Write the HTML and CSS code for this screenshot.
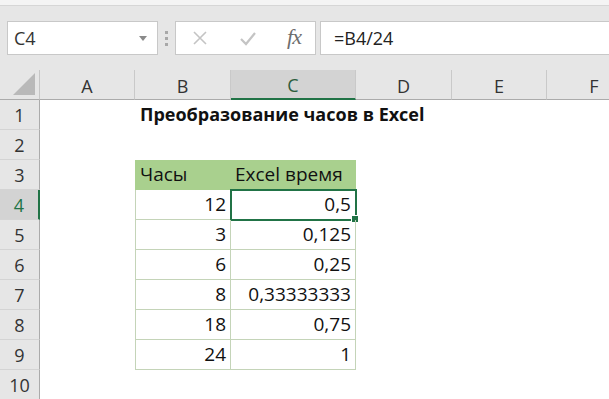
FILE: index.html
```html
<!doctype html>
<html>
<head>
<meta charset="utf-8">
<title>Преобразование часов в Excel</title>
<link rel="stylesheet" href="styles.css">
</head>
<body>
<div class="top-strip"></div>
<div class="formula-bar">
    <div class="name-box">
        <span class="name-txt">C4</span>
        <svg class="name-arrow" width="8" height="5" viewBox="0 0 8 5"><polygon points="0,0 8,0 4,5" fill="#8a8a8a"/></svg>
    </div>
    <div class="bar-dots"><i></i><i></i><i></i></div>
    <div class="fx-box">
        <svg class="fx-icon" width="16" height="16" viewBox="0 0 16 16"><path d="M2 2 L14 14 M14 2 L2 14" stroke="#c4c4c4" stroke-width="1.6" fill="none"/></svg>
        <svg class="fx-icon" width="18" height="16" viewBox="0 0 18 16"><path d="M2 9 L7 14 L16 3" stroke="#c4c4c4" stroke-width="2.2" fill="none"/></svg>
        <span class="fx-txt">fx</span>
    </div>
    <div class="formula-box">=B4/24</div>
</div>
<div class="sheet">
    <div class="hd corner"><svg width="22" height="22" viewBox="0 0 22 22"><polygon points="22,0 22,22 0,22" fill="#b9b9b9"/></svg></div>
    <div class="hd col">A</div>
    <div class="hd col">B</div>
    <div class="hd col col-on">C</div>
    <div class="hd col">D</div>
    <div class="hd col">E</div>
    <div class="hd col col-cut">F</div>

    <div class="hd row">1</div>
    <div class="cell"></div>
    <div class="cell title">Преобразование часов в Excel</div>
    <div class="cell"></div>
    <div class="cell"></div>
    <div class="cell"></div>
    <div class="cell"></div>

    <div class="hd row">2</div>
    <div class="cell"></div><div class="cell"></div><div class="cell"></div><div class="cell"></div><div class="cell"></div><div class="cell"></div>

    <div class="hd row">3</div>
    <div class="cell"></div>
    <div class="cell tb tb-first tb-head">Часы</div>
    <div class="cell tb tb-head">Excel время</div>
    <div class="cell"></div><div class="cell"></div><div class="cell"></div>

    <div class="hd row row-on">4</div>
    <div class="cell"></div>
    <div class="cell tb tb-first num">12</div>
    <div class="cell tb num selected">0,5<span class="handle"></span></div>
    <div class="cell"></div><div class="cell"></div><div class="cell"></div>

    <div class="hd row">5</div>
    <div class="cell"></div>
    <div class="cell tb tb-first num">3</div>
    <div class="cell tb num">0,125</div>
    <div class="cell"></div><div class="cell"></div><div class="cell"></div>

    <div class="hd row">6</div>
    <div class="cell"></div>
    <div class="cell tb tb-first num">6</div>
    <div class="cell tb num">0,25</div>
    <div class="cell"></div><div class="cell"></div><div class="cell"></div>

    <div class="hd row">7</div>
    <div class="cell"></div>
    <div class="cell tb tb-first num">8</div>
    <div class="cell tb num">0,33333333</div>
    <div class="cell"></div><div class="cell"></div><div class="cell"></div>

    <div class="hd row">8</div>
    <div class="cell"></div>
    <div class="cell tb tb-first num">18</div>
    <div class="cell tb num">0,75</div>
    <div class="cell"></div><div class="cell"></div><div class="cell"></div>

    <div class="hd row">9</div>
    <div class="cell"></div>
    <div class="cell tb tb-first num">24</div>
    <div class="cell tb num">1</div>
    <div class="cell"></div><div class="cell"></div><div class="cell"></div>

    <div class="hd row">10</div>
    <div class="cell"></div><div class="cell"></div><div class="cell"></div><div class="cell"></div><div class="cell"></div><div class="cell"></div>
</div>
</body>
</html>
```

FILE: styles.css
```css
html,body{margin:0;padding:0;background:#fff;}
body{font-family:"Open Sans","Noto Sans",sans-serif;color:#111;width:609px;height:399px;overflow:hidden;}

.top-strip{height:5px;background:#f4f4f4;border-bottom:1px solid #d6d6d6;}
.formula-bar{height:64px;background:#e6e6e6;display:flex;align-items:flex-start;padding:15px 0 0 7px;box-sizing:border-box;}
.name-box{width:151px;height:34px;background:#fff;border:1px solid #c8c8c8;box-sizing:border-box;display:flex;align-items:center;justify-content:space-between;padding:0 10px 0 6px;}
.name-txt{font-size:18px;color:#333;}
.name-arrow{margin-top:1px;}
.bar-dots{width:17px;height:34px;display:flex;flex-direction:column;align-items:center;justify-content:center;gap:3px;}
.bar-dots i{display:block;width:3px;height:3px;background:#a8a8a8;}
.fx-box{margin-left:0;width:141px;height:34px;background:#fff;border:1px solid #c8c8c8;box-sizing:border-box;display:flex;align-items:center;padding:0 14px 0 16px;justify-content:space-between;}
.fx-txt{font-family:"Liberation Serif","DejaVu Serif",serif;font-style:italic;font-size:22px;color:#6e6e6e;letter-spacing:-1px;margin-top:-2px;}
.formula-box{margin-left:4px;flex:1;height:34px;background:#fff;border:1px solid #c8c8c8;border-right:0;box-sizing:border-box;font-size:18px;line-height:32px;padding-left:13px;color:#222;}

.sheet{display:grid;grid-template-columns:40px 95px 96px 125px 96px 95px 62px;grid-template-rows:30px repeat(10,30px);}
.hd{background:#e6e6e6;color:#333;font-size:18px;box-sizing:border-box;display:flex;align-items:center;justify-content:center;}
.corner{border-right:1px solid #c6c6c6;border-bottom:1px solid #ababab;justify-content:flex-end;align-items:flex-end;padding:0 4px 4px 0;}
.col{border-right:1px solid #c9c9c9;border-bottom:1px solid #ababab;padding-top:2px;}
.col-cut{border-right:0;padding-left:32px;}
.col-on{background:#d3d3d3;border-bottom:2px solid #217346;color:#2d5d3d;}
.row{border-right:1px solid #ababab;border-bottom:1px solid #d4d4d4;}
.row-on{background:#d3d3d3;border-right:2px solid #217346;color:#217346;}

.cell{box-sizing:border-box;font-size:19px;line-height:29px;white-space:nowrap;position:relative;color:#111;}
.title{font-weight:700;font-size:18px;padding-left:5px;overflow:visible;z-index:1;}
.tb{border-right:1px solid #c4d4b8;border-bottom:1px solid #c4d4b8;padding:0 4px;}
.tb-first{border-left:1px solid #c4d4b8;}
.tb-head{background:#a9d08e;border-color:#a9d08e;border-right-color:#a9d08e;}
.tb-head.tb-first{border-left-color:#a9d08e;}
.num{text-align:right;}
.selected{outline:2px solid #217346;outline-offset:-1px;}
.handle{position:absolute;right:-4px;bottom:-4px;width:6px;height:6px;background:#217346;border:1px solid #fff;}
```
